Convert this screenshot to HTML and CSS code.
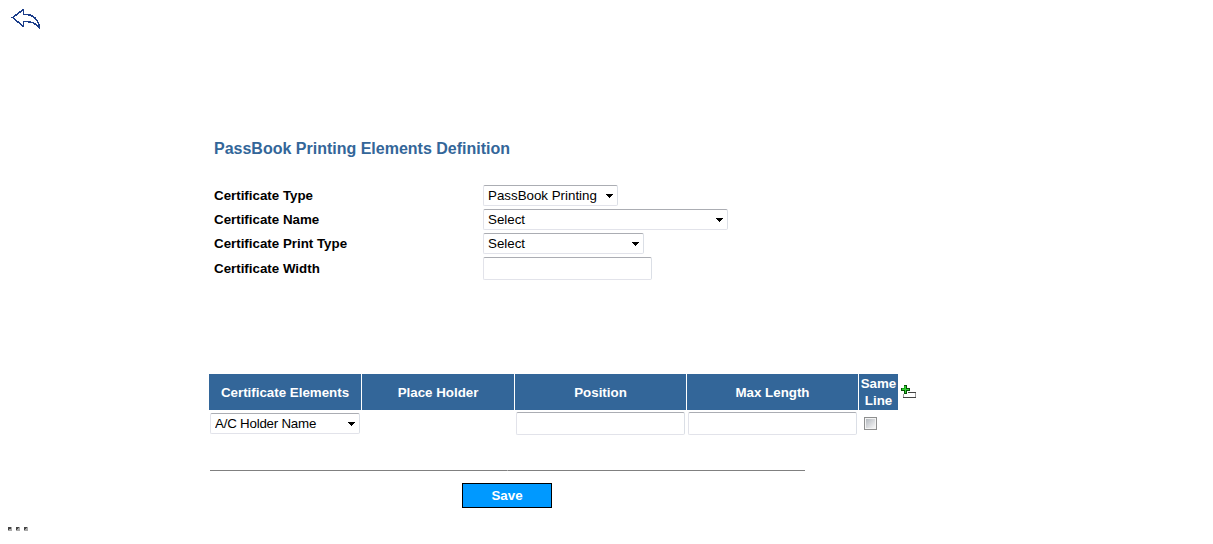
FILE: index.html
```html
<!DOCTYPE html>
<html lang="en">
<head>
<meta charset="utf-8">
<title>PassBook Printing Elements Definition</title>
<link rel="stylesheet" href="styles.css">
</head>
<body>
<header class="topbar">
  <svg class="back" width="30" height="22" viewBox="0 0 30 22"><path d="M1.5 9.500 L12.500 1.500 V6.500 C21 6 27 10 28.500 20 C24 14.500 20 13.500 12.500 13.500 V18.500 Z"/></svg>
</header>
<main class="page">
  <h1 class="title">PassBook Printing Elements Definition</h1>
  <form class="form">
    <label class="label">Certificate Type</label>
    <span class="select type"><select class="control"><option>PassBook Printing</option></select><svg class="arrow" width="7" height="4"><path d="M0 0h7v1H6v1H5v1H4v1H3V3H2V2H1V1H0z"/></svg></span>
    <label class="label">Certificate Name</label>
    <span class="select name"><select class="control"><option>Select</option></select><svg class="arrow" width="7" height="4"><path d="M0 0h7v1H6v1H5v1H4v1H3V3H2V2H1V1H0z"/></svg></span>
    <label class="label">Certificate Print Type</label>
    <span class="select print"><select class="control"><option>Select</option></select><svg class="arrow" width="7" height="4"><path d="M0 0h7v1H6v1H5v1H4v1H3V3H2V2H1V1H0z"/></svg></span>
    <label class="label">Certificate Width</label>
    <input class="control text" type="text">
  </form>
  <section class="elements">
    <div class="head">Certificate Elements</div>
    <div class="head">Place Holder</div>
    <div class="head">Position</div>
    <div class="head">Max Length</div>
    <div class="head">Same Line</div>
    <svg class="add" width="15" height="14" shape-rendering="crispEdges"><path fill="#999" d="M2 9h1v3H2zM14 8h1v4h-1z"/><path fill="#444" d="M7 7h8v1H7zM2 12h13v1H2z"/><path fill="#075207" d="M3 0h3v3h3v3H6v3H3V6H0V3h3z"/><path fill="#2fd02f" d="M4 1h1v3h3v1H5v3H4V5H1V4h3z"/><path fill="#1da81d" d="M3 1h1v3H3zM1 3h2v1H1z"/></svg>
    <div class="cell"><span class="select element"><select class="control"><option>A/C Holder Name</option></select><svg class="arrow" width="7" height="4"><path d="M0 0h7v1H6v1H5v1H4v1H3V3H2V2H1V1H0z"/></svg></span></div>
    <div class="cell"></div>
    <div class="cell"><input class="control text" type="text"></div>
    <div class="cell"><input class="control text" type="text"></div>
    <div class="cell check-cell"><input class="check" type="checkbox"></div>
  </section>
  <div class="rule"><span></span><span></span></div>
  <button class="save" type="button">Save</button>
</main>
<footer class="dots"><i class="dot"></i><i class="dot"></i><i class="dot"></i></footer>
</body>
</html>
```

FILE: styles.css
```css
* { box-sizing: border-box; }
body {
  margin: 0;
  height: 544px;
  overflow: hidden;
  background: #fff;
  color: #000;
  font: 13.333px/17px "Liberation Sans", Arial, sans-serif;
}
.topbar { height: 139px; padding: 8px 0 0 11px; }
.back { display: block; fill: #fff; stroke: #1b3d8a; stroke-width: 1.5; shape-rendering: crispEdges; }
.page { display: flex; flex-direction: column; align-items: flex-start; height: 388px; padding-left: 209px; }
.title { margin: 0 0 26px 5px; font-size: 16px; line-height: 20px; color: #336699; white-space: nowrap; }
.form {
  display: grid;
  grid-template-columns: 269px 245px;
  grid-template-rows: 21px 21px 21px 23px;
  row-gap: 3px;
  margin-left: 5px;
  align-items: center;
}
.label { font-weight: bold; white-space: nowrap; }
.select { position: relative; display: block; height: 21px; }
.type { width: 135px; }
.name { width: 245px; }
.print { width: 161px; }
.element { width: 150px; }
.element .control { letter-spacing: -0.22px; }
.control {
  display: block;
  width: 100%;
  height: 21px;
  margin: 0;
  padding: 0 0 0 4px;
  appearance: none;
  border: 1px solid #e2e3ea;
  border-top-color: #abadb3;
  border-right-color: #dbdfe6;
  border-radius: 2px;
  background: #fff;
  color: #000;
  font: 13.333px/17px "Liberation Sans", Arial, sans-serif;
  outline: 0;
}
.text { width: 169px; height: 23px; }
.arrow { position: absolute; right: 5px; top: 9px; pointer-events: none; }
.elements {
  display: grid;
  grid-template-columns: 152px 152px 171px 171px 39px 15px;
  grid-template-rows: 36px 27px;
  column-gap: 1px;
  margin-top: 94px;
}
.head {
  display: flex;
  align-items: center;
  justify-content: center;
  background: #336699;
  color: #fff;
  font-weight: bold;
  text-align: center;
}
.add { margin: 11px 0 0 2px; }
.cell { display: flex; align-items: center; padding-left: 1px; }
.check-cell { padding-left: 5px; }
.check {
  width: 13px;
  height: 13px;
  margin: 0;
  padding: 1px;
  appearance: none;
  border: 1px solid #8e8f8f;
  background: linear-gradient(135deg, #b4b9bf, #f7f7f7) content-box, #f4f4f4;
}
.rule { display: flex; gap: 1px; width: 595px; height: 1px; margin: 33px 0 0 1px; background: #aaa; }
.rule span { background: #808080; }
.rule span:first-child { width: 297px; }
.rule span:last-child { flex: 1; }
.save {
  width: 90px;
  height: 25px;
  margin: 12px 0 0 253px;
  padding: 0;
  border: 1px solid #000;
  background: #0099ff;
  color: #fff;
  font: bold 13.333px/17px "Liberation Sans", Arial, sans-serif;
}
.dots { display: flex; gap: 4px; padding-left: 8px; }
.dot { width: 4px; height: 4px; background: linear-gradient(135deg, #444 50%, #aaa 50%); }
```
